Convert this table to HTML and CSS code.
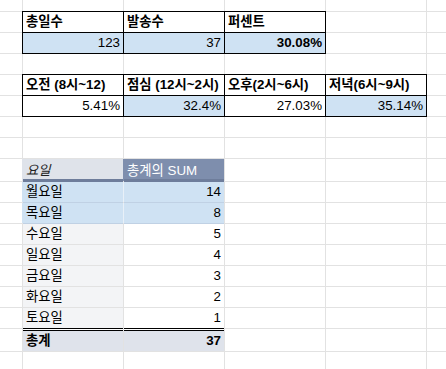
FILE: index.html
```html
<!DOCTYPE html>
<html lang="ko">
<head>
<meta charset="utf-8">
<title>Sheet</title>
<link rel="stylesheet" href="styles.css">
</head>
<body>
<div class="sheet">
  <!-- row 1 -->
  <div class="c"></div><div class="c"></div><div class="c"></div><div class="c"></div><div class="c"></div><div class="c"></div>
  <!-- row 2 -->
  <div class="c"></div>
  <div class="c bd b">총일수</div>
  <div class="c bd b">발송수</div>
  <div class="c bd b">퍼센트</div>
  <div class="c"></div><div class="c"></div>
  <!-- row 3 -->
  <div class="c"></div>
  <div class="c bd blue r">123</div>
  <div class="c bd blue r">37</div>
  <div class="c bd blue r b">30.08%</div>
  <div class="c"></div><div class="c"></div>
  <!-- row 4 -->
  <div class="c"></div><div class="c"></div><div class="c"></div><div class="c"></div><div class="c"></div><div class="c"></div>
  <!-- row 5 -->
  <div class="c"></div>
  <div class="c bd b">오전 (8시~12)</div>
  <div class="c bd b">점심 (12시~2시)</div>
  <div class="c bd b">오후(2시~6시)</div>
  <div class="c bd b">저녁(6시~9시)</div>
  <div class="c"></div>
  <!-- row 6 -->
  <div class="c"></div>
  <div class="c bd r">5.41%</div>
  <div class="c bd blue r">32.4%</div>
  <div class="c bd r">27.03%</div>
  <div class="c bd blue r">35.14%</div>
  <div class="c"></div>
  <!-- row 7 -->
  <div class="c"></div><div class="c"></div><div class="c"></div><div class="c"></div><div class="c"></div><div class="c"></div>
  <!-- row 8 -->
  <div class="c"></div><div class="c"></div><div class="c"></div><div class="c"></div><div class="c"></div><div class="c"></div>
  <!-- row 9: pivot header -->
  <div class="c"></div>
  <div class="c ph-label">요일</div>
  <div class="c ph-val">총계의 SUM</div>
  <div class="c"></div><div class="c"></div><div class="c"></div>
  <!-- pivot rows -->
  <div class="c"></div>
  <div class="c pv-blue first">월요일</div>
  <div class="c pv-blue second r">14</div>
  <div class="c"></div><div class="c"></div><div class="c"></div>

  <div class="c"></div>
  <div class="c pv-blue first">목요일</div>
  <div class="c pv-blue second r">8</div>
  <div class="c"></div><div class="c"></div><div class="c"></div>

  <div class="c"></div>
  <div class="c pv-label">수요일</div>
  <div class="c r">5</div>
  <div class="c"></div><div class="c"></div><div class="c"></div>

  <div class="c"></div>
  <div class="c pv-label">일요일</div>
  <div class="c r">4</div>
  <div class="c"></div><div class="c"></div><div class="c"></div>

  <div class="c"></div>
  <div class="c pv-label">금요일</div>
  <div class="c r">3</div>
  <div class="c"></div><div class="c"></div><div class="c"></div>

  <div class="c"></div>
  <div class="c pv-label">화요일</div>
  <div class="c r">2</div>
  <div class="c"></div><div class="c"></div><div class="c"></div>

  <div class="c"></div>
  <div class="c pv-label">토요일</div>
  <div class="c r">1</div>
  <div class="c"></div><div class="c"></div><div class="c"></div>

  <!-- total -->
  <div class="c"></div>
  <div class="c pv-total first">총계</div>
  <div class="c pv-total r">37</div>
  <div class="c"></div><div class="c"></div><div class="c"></div>
  <!-- last row -->
  <div class="c"></div><div class="c"></div><div class="c"></div><div class="c"></div><div class="c"></div><div class="c"></div>
</div>
</body>
</html>
```
FILE: styles.css
```css
html, body {
  margin: 0;
  background: #fff;
}

.sheet {
  display: grid;
  grid-template-columns: 22px 100px 100px 100px 100px 1fr;
  grid-template-rows: 11px repeat(7, 20px) 22px repeat(7, 20px) 22px 20px;
  gap: 1px;
  background: #e2e2e2;
  height: 369px;
  overflow: hidden;
  font-family: "Liberation Sans", "Noto Sans CJK KR", sans-serif;
  font-size: 13.33px;
  color: #000;
}

.c {
  background: #fff;
  display: flex;
  align-items: flex-end;
  padding: 0 3px 3px;
  line-height: 15px;
  white-space: nowrap;
  overflow: hidden;
  min-width: 0;
}

.r { justify-content: flex-end; }
.b { font-weight: bold; }

.bd { box-shadow: 0 0 0 1px #000; }
.blue { background: #cfe2f3; }

.ph-label {
  background: #dfe3ea;
  font-style: italic;
  color: #222;
  border-bottom: 2px solid #6e7d9b;
  box-shadow: 0 1px 0 #6e7d9b, -1px 0 0 #dfe3ea;
  padding-bottom: 1px;
}

.ph-val {
  background: #7e8ead;
  color: #fff;
  border-bottom: 2px solid #6e7d9b;
  box-shadow: 0 1px 0 #6e7d9b, -1px 0 0 #7e8ead;
  padding-bottom: 1px;
}

.pv-blue {
  background: #cfe2f3;
  box-shadow: 0 1px 0 #c0d1e4;
}
.pv-blue.first {
  box-shadow: 0 1px 0 #c0d1e4, -1px 0 0 #cfe2f3;
}
.pv-blue.second {
  box-shadow: 0 1px 0 #c0d1e4, -1px 0 0 #e8f0f8;
}

.pv-label {
  background: #f3f4f6;
}

.pv-total {
  background: #dfe3eb;
  font-weight: bold;
  box-shadow: 0 -1px 0 #000, inset 0 1px 0 #fff, inset 0 2px 0 #000;
}
```
